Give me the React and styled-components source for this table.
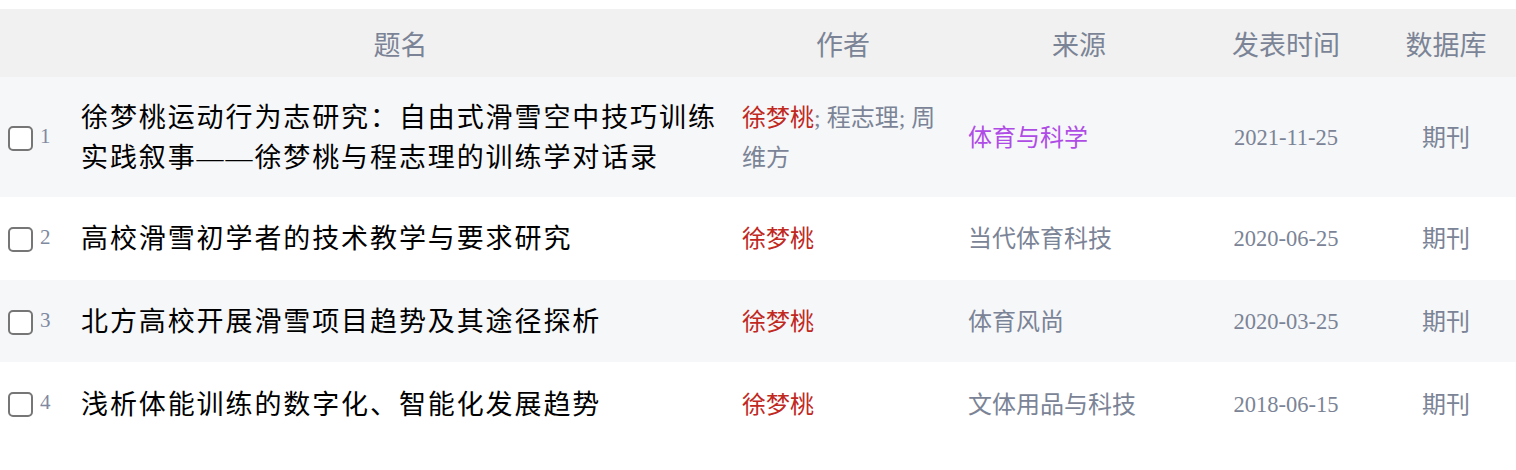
import React from "react";
import styled, { createGlobalStyle } from "styled-components";

const GlobalStyle = createGlobalStyle`
  body {
    margin: 0;
    background: #fff;
    font-family: "Liberation Serif", "Noto Sans CJK SC", serif;
  }
`;

const papers = [
  {
    id: 1,
    title: "徐梦桃运动行为志研究：自由式滑雪空中技巧训练实践叙事——徐梦桃与程志理的训练学对话录",
    authors: ["徐梦桃", "程志理", "周维方"],
    source: "体育与科学",
    sourceHot: true,
    date: "2021-11-25",
    db: "期刊",
  },
  {
    id: 2,
    title: "高校滑雪初学者的技术教学与要求研究",
    authors: ["徐梦桃"],
    source: "当代体育科技",
    date: "2020-06-25",
    db: "期刊",
  },
  {
    id: 3,
    title: "北方高校开展滑雪项目趋势及其途径探析",
    authors: ["徐梦桃"],
    source: "体育风尚",
    date: "2020-03-25",
    db: "期刊",
  },
  {
    id: 4,
    title: "浅析体能训练的数字化、智能化发展趋势",
    authors: ["徐梦桃"],
    source: "文体用品与科技",
    date: "2018-06-15",
    db: "期刊",
  },
];

const Table = styled.div`
  margin-top: 9px;
  width: 1516px;
`;

const cols = "81px 661px 226px 222px 192px 128px";

const HeadRow = styled.div`
  display: grid;
  grid-template-columns: ${cols};
  height: 68px;
  align-items: center;
  background: #f1f1f1;
`;

const HeadCell = styled.div`
  text-align: center;
  font-size: 27px;
  color: #7b8496;
  padding-right: ${(p) => p.$pr || 0}px;
`;

const Row = styled.div`
  display: grid;
  grid-template-columns: ${cols};
  align-items: center;
  box-sizing: border-box;
  min-height: 82.7px;
  padding: 21px 0 19px;
  background: ${(p) => (p.$alt ? "#f6f7f9" : "#fff")};
`;

const CheckCell = styled.label`
  display: flex;
  align-items: flex-start;
  gap: 7px;
  padding-left: 8px;
`;

const Box = styled.input.attrs({ type: "checkbox" })`
  appearance: none;
  margin: 0;
  width: 25px;
  height: 25px;
  border: 2px solid #767676;
  border-radius: 5px;
  background: #fff;
  box-sizing: border-box;
`;

const Num = styled.span`
  font-size: 21px;
  line-height: 21px;
  color: #7f89a0;
`;

const Title = styled.div`
  font-size: 27px;
  letter-spacing: 1.9px;
  line-height: 40px;
  color: #000;
  padding-right: 22px;
`;

const Authors = styled.div`
  font-size: 24px;
  line-height: 40px;
  color: #7b8496;
  padding-right: 24px;
`;

const Me = styled.span`
  color: #c1291f;
`;

const Source = styled.div`
  font-size: 24px;
  line-height: 40px;
  color: ${(p) => (p.$hot ? "#b04ce6" : "#7b8496")};
`;

const Centered = styled.div`
  text-align: center;
  font-size: ${(p) => p.$size || 24}px;
  line-height: 40px;
  color: #7b8496;
`;

export default function App() {
  return (
    <>
      <GlobalStyle />
      <Table>
        <HeadRow>
          <div />
          <HeadCell $pr={22}>题名</HeadCell>
          <HeadCell $pr={24}>作者</HeadCell>
          <HeadCell>来源</HeadCell>
          <HeadCell>发表时间</HeadCell>
          <HeadCell>数据库</HeadCell>
        </HeadRow>
        {papers.map((p, i) => (
          <Row key={p.id} $alt={i % 2 === 0}>
            <CheckCell>
              <Box />
              <Num>{p.id}</Num>
            </CheckCell>
            <Title>{p.title}</Title>
            <Authors>
              {p.authors.map((a, j) => (
                <React.Fragment key={a}>
                  {j > 0 && "; "}
                  {a === "徐梦桃" ? <Me>{a}</Me> : a}
                </React.Fragment>
              ))}
            </Authors>
            <Source $hot={p.sourceHot}>{p.source}</Source>
            <Centered $size={22.5}>{p.date}</Centered>
            <Centered>{p.db}</Centered>
          </Row>
        ))}
      </Table>
    </>
  );
}
